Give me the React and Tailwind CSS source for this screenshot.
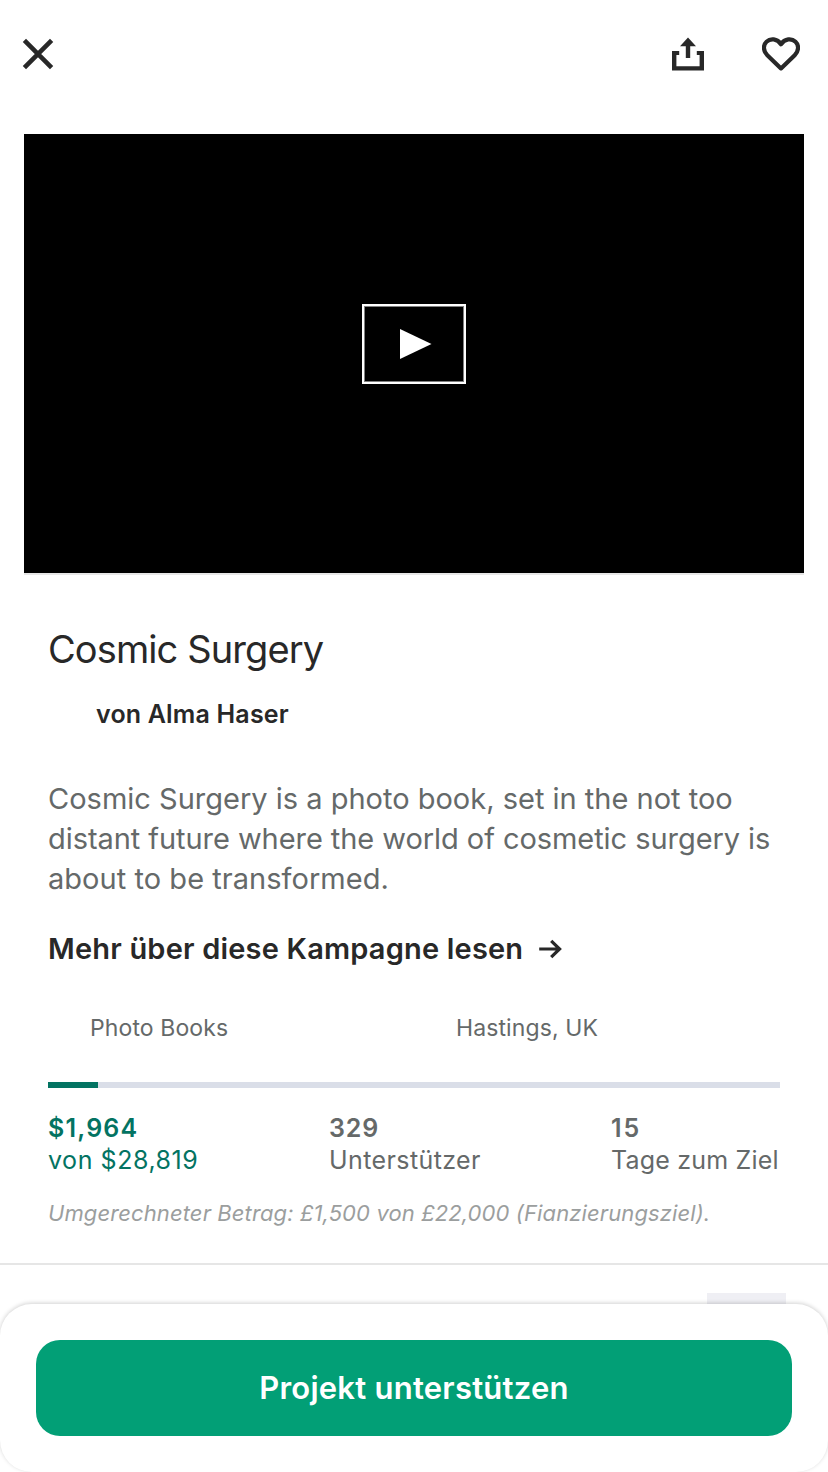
function CloseIcon() {
  return (
    <svg width="32" height="32" viewBox="0 0 32 32" fill="none" stroke="#282828" strokeWidth="4.6">
      <path d="M2.400 2.400 29.600 29.600M29.600 2.400 2.400 29.600" />
    </svg>
  );
}

function ShareIcon() {
  return (
    <svg width="32" height="34" viewBox="0 0 32 34" fill="#282828">
      <path d="M16 .5 24 9.300H18.200V21H13.800V9.300H8Z" />
      <path d="M0 14H7.200V18H4.400V29.200H27.600V18H24.800V14H32V33.600H0Z" />
    </svg>
  );
}

function HeartIcon() {
  return (
    <svg width="38" height="34" viewBox="0 0 38 34" fill="none" stroke="#282828" strokeWidth="4.2" strokeLinejoin="round">
      <path d="M19 31.400 5.300 18.200C1.100 14 .9 8 4.500 4.700 8.300 1.100 15.200 1.300 19 7.300 22.800 1.300 29.700 1.100 33.500 4.700 37.100 8 36.900 14 32.700 18.200Z" />
    </svg>
  );
}

function ArrowIcon() {
  return (
    <svg width="24" height="20" viewBox="0 0 24 20" fill="none" stroke="#282828" strokeWidth="3.2">
      <path d="M.2 10H21M12.200 1.800 20.600 10 12.200 18.200" />
    </svg>
  );
}

function Header() {
  return (
    <header className="flex h-[134px] items-start justify-between pt-[37px] pr-7 pl-[22px]">
      <button aria-label="Schließen" className="mt-px"><CloseIcon /></button>
      <div className="flex items-start gap-[58px]">
        <button aria-label="Teilen"><ShareIcon /></button>
        <button aria-label="Merken"><HeartIcon /></button>
      </div>
    </header>
  );
}

function Stats() {
  return (
    <div className="mt-6 flex h-16 text-[25px] leading-8 whitespace-nowrap text-[#656969]">
      <div className="w-[281px] text-[#037362]">
        <p className="font-semibold tracking-[1.2px]">$1,964</p>
        <p className="tracking-[0.55px]">von $28,819</p>
      </div>
      <div className="w-[282px]">
        <p className="font-semibold tracking-[0.9px]">329</p>
        <p className="tracking-[0.4px]">Unterstützer</p>
      </div>
      <div>
        <p className="font-semibold tracking-[2px]">15</p>
        <p className="tracking-[0.2px]">Tage zum Ziel</p>
      </div>
    </div>
  );
}

export default function App() {
  return (
    <div className="relative h-[1472px] w-[828px] overflow-hidden bg-white font-['Inter',sans-serif] text-[#282828]">
      <Header />
      <div className="mx-6 flex h-[441px] items-center justify-center border-b-2 border-[#e6e6e6] bg-black pb-[19px]">
        <button aria-label="Video abspielen" className="flex h-20 w-26 items-center justify-center border-2 border-white shadow-[inset_0_0_0_1px_#808080]">
          <svg width="32" height="30" viewBox="0 0 32 30" className="ml-1" fill="#fff">
            <path d="M0 0 31.500 15 0 30Z" />
          </svg>
        </button>
      </div>
      <main className="px-12 whitespace-nowrap">
        <h1 className="mt-[50px] h-12 text-[38px] leading-12 tracking-[-0.9px]">Cosmic Surgery</h1>
        <p className="mt-[25px] h-8 pl-12 text-[25px] leading-8 font-semibold tracking-[0.18px]">von Alma Haser</p>
        <div className="mt-[49px] text-[29px] leading-10 text-[#656969]">
          <p>Cosmic Surgery is a photo book, set in the not too</p>
          <p className="tracking-[-0.06px]">distant future where the world of cosmetic surgery is</p>
          <p className="tracking-[0.04px]">about to be transformed.</p>
        </div>
        <button className="mt-[30px] flex h-10 items-center gap-4 text-[29px] font-semibold tracking-[0.19px]">
          <span>Mehr über diese Kampagne lesen</span>
          <ArrowIcon />
        </button>
        <div className="mt-[43px] flex h-8 text-[23px] leading-8 tracking-[0.1px] text-[#656969]">
          <p className="w-[366px] pl-[42px]">Photo Books</p>
          <p className="pl-[42px]">Hastings, UK</p>
        </div>
        <div className="mt-[38px] h-1.5 bg-[#dadee8]">
          <div className="h-full w-[50px] bg-[#037362]" />
        </div>
        <Stats />
        <p className="mt-[21px] h-8 text-[22px] leading-8 tracking-[0.11px] text-[#9b9e9e] italic">
          Umgerechneter Betrag: £1,500 von £22,000 (Fianzierungsziel).
        </p>
      </main>
      <div className="mt-[34px] flex h-15 justify-end border-t-2 border-[#e6e6e6] pt-7 pr-[42px]">
        <div className="h-8 w-[79px] bg-[#efeff4]" />
      </div>
      <div className="absolute inset-x-0 bottom-0 h-[168px] rounded-[32px] bg-white px-9 pt-9 shadow-[0_-1px_4px_rgba(0,0,0,0.18)]">
        <button className="flex h-24 w-full items-center justify-center rounded-3xl bg-[#029f76] text-[31px] font-semibold tracking-[0.24px] text-white">
          Projekt unterstützen
        </button>
      </div>
    </div>
  );
}
